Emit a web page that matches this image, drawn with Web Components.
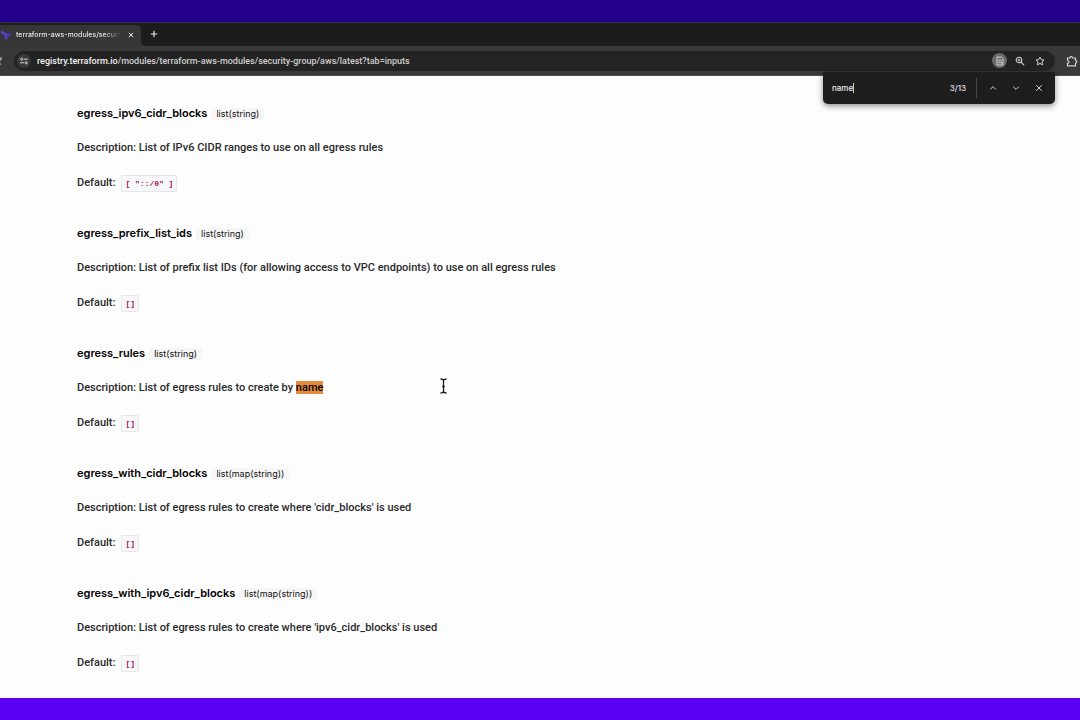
<!DOCTYPE html>
<html lang="en">
<head>
<meta charset="utf-8">
<title>terraform-aws-modules/security-group</title>
<style>
  body { margin: 0; font-family: Inter, "Liberation Sans", sans-serif; }
</style>
</head>
<body>
<screen-frame>
  <browser-tabs slot="chrome">terraform-aws-modules/security-group/aws</browser-tabs>
  <browser-toolbar slot="chrome" host="registry.terraform.io" path="/modules/terraform-aws-modules/security-group/aws/latest?tab=inputs"></browser-toolbar>
  <find-bar slot="find" query="name" count="3/13"></find-bar>
  <module-input name="egress_ipv6_cidr_blocks" type="list(string)">List of IPv6 CIDR ranges to use on all egress rules<code-value slot="default">[ "::/0" ]</code-value></module-input>
  <module-input name="egress_prefix_list_ids" type="list(string)">List of prefix list IDs (for allowing access to VPC endpoints) to use on all egress rules<code-value slot="default">[]</code-value></module-input>
  <module-input name="egress_rules" type="list(string)">List of egress rules to create by <find-match>name</find-match><code-value slot="default">[]</code-value></module-input>
  <module-input name="egress_with_cidr_blocks" type="list(map(string))">List of egress rules to create where 'cidr_blocks' is used<code-value slot="default">[]</code-value></module-input>
  <module-input name="egress_with_ipv6_cidr_blocks" type="list(map(string))">List of egress rules to create where 'ipv6_cidr_blocks' is used<code-value slot="default">[]</code-value></module-input>
  <text-cursor slot="pointer"></text-cursor>
</screen-frame>

<script>
const define = (name, html, setup) => {
  const template = document.createElement('template');
  template.innerHTML = html;
  customElements.define(name, class extends HTMLElement {
    constructor() {
      super();
      this.attachShadow({ mode: 'open' }).append(template.content.cloneNode(true));
    }
    connectedCallback() { if (setup) setup(this, this.shadowRoot); }
  });
};

define('screen-frame', `
  <style>
    :host { display: flex; flex-direction: column; min-height: 100vh; position: relative; overflow: hidden; background: #fdfdfd; }
    .top { height: 22px; background: #22008c; border-bottom: 1px solid #35324a; }
    .bottom { height: 22px; background: #5a00f4; }
    main { flex: 1; padding: 27px 77px 0; display: flex; flex-direction: column; gap: 30px; }
  </style>
  <div class="top"></div>
  <slot name="chrome"></slot>
  <slot name="find"></slot>
  <main><slot></slot></main>
  <slot name="pointer"></slot>
  <div class="bottom"></div>
`);

define('browser-tabs', `
  <style>
    :host { display: flex; height: 23px; background: #1c1c1c; color: #e4e4e4; font-size: 7px; font-weight: 500; }
    .tab { position: relative; display: flex; align-items: center; box-sizing: border-box; width: 141px; margin-top: 2px; padding: 0 4px 2px 0; background: #363636; border-top-right-radius: 5px; }
    .tab::after { content: ""; position: absolute; left: 100%; bottom: 0; width: 5px; height: 5px; background: radial-gradient(circle at 100% 0, transparent 5px, #363636 5px); }
    .title { flex: 1; margin-left: 4px; overflow: hidden; white-space: nowrap; line-height: 12px; -webkit-mask-image: linear-gradient(90deg, #000 84%, transparent); mask-image: linear-gradient(90deg, #000 84%, transparent); }
    button { display: flex; justify-content: center; align-items: center; width: 12px; height: 12px; padding: 0; border: 0; background: none; color: #eee; }
    .close { margin-left: 4px; }
    .new { margin: 5px 0 0 7px; }
    svg { display: block; fill: none; stroke: currentColor; }
  </style>
  <div class="tab">
    <svg width="12" height="12" viewBox="0 0 12 12"><g fill="#5a40d8" stroke="none"><path d="M1 1.200 4 3v3.300L1 4.500z"/><path d="m4.500 3.200 3 1.700v3.300l-3-1.700zM4.500 7l3 1.700V11l-3-1.700z"/><path fill="#4930b4" d="m8 4.900 3-1.700v3.300L8 8.200z"/></g></svg>
    <span class="title"><slot></slot></span>
    <button class="close" aria-label="Close tab"><svg width="6" height="6" viewBox="0 0 6 6"><path d="m.8.8 4.4 4.4M5.2.8.8 5.2"/></svg></button>
  </div>
  <button class="new" aria-label="New tab"><svg width="8" height="8" viewBox="0 0 8 8"><path d="M4 .8v6.4M.8 4h6.4" stroke-width="1.1"/></svg></button>
`);

define('browser-toolbar', `
  <style>
    :host { display: flex; align-items: center; box-sizing: border-box; height: 30px; padding-right: 1px; background: #383838; border-bottom: 1px solid #4b4b4b; color: #d2d2d2; }
    button { flex: none; display: flex; justify-content: center; align-items: center; width: 14px; height: 14px; padding: 0; border: 0; border-radius: 50%; background: none; color: #d0d0d0; }
    svg { display: block; fill: none; stroke: currentColor; }
    .reload { width: 2px; height: 8px; margin-right: 12px; justify-content: flex-end; overflow: hidden; border-radius: 0; }
    .address { flex: 1; min-width: 0; display: flex; align-items: center; gap: 6px; height: 20px; padding: 0 8px 0 3px; border-radius: 10px; background: #232323; }
    .site { background: #3a3a3a; }
    a { flex: 1; overflow: hidden; white-space: nowrap; color: #cfcfcf; text-decoration: none; font: 500 9px/14px Roboto, sans-serif; }
    .host { color: #f4f4f4; }
    .find { width: 15px; height: 15px; background: #6a6a6a; }
    .ext { margin-left: 10px; }
  </style>
  <button class="reload" aria-label="Reload"><svg width="2" height="8" viewBox="0 0 2 8"><path d="M0 3h1V0M0 7h1" /></svg></button>
  <div class="address">
    <button class="site" aria-label="Site information"><svg width="8" height="8" viewBox="0 0 8 8" stroke-width="1"><circle cx="1.8" cy="2.2" r="1.1"/><path d="M4 2.2h4M0 5.8h4"/><circle cx="6.2" cy="5.8" r="1.1"/></svg></button>
    <a href="#"><span class="host"></span><span class="path"></span></a>
    <button class="find" aria-label="Find in page"><svg width="10" height="10" viewBox="0 0 10 10" stroke-width="1"><path d="M2 1h4.4L8 2.6V9H2z"/><circle cx="5" cy="5.4" r="1.5"/><path d="m6.1 6.5 1.7 1.8"/></svg></button>
    <button aria-label="Zoom"><svg width="10" height="10" viewBox="0 0 10 10" stroke-width="1.1"><circle cx="4" cy="4" r="2.8"/><path d="m6.1 6.1 3 3M2.8 4h2.4M4 2.8v2.4"/></svg></button>
    <button aria-label="Bookmark"><svg width="10" height="10" viewBox="0 0 10 10" stroke-width="1"><path d="m5 1 1.2 2.7 2.9.3L6.9 6l.7 2.9L5 7.4 2.4 8.900l.7-2.900L.9 4l2.900-.3z"/></svg></button>
  </div>
  <button class="ext" aria-label="Extensions"><svg width="12" height="12" viewBox="0 0 12 12" stroke-width="1.2"><path d="M1.500 3h2.300a1.400 1.400 0 0 1 2.800 0h2.900v2.500a1.300 1.300 0 0 1 0 2.600v2.700h-8V8.300a1.400 1.400 0 0 0 0-2.800z"/></svg></button>
`, (el, root) => {
  root.querySelector('.host').textContent = el.getAttribute('host');
  root.querySelector('.path').textContent = el.getAttribute('path');
});

define('find-bar', `
  <style>
    :host { position: absolute; top: 72px; right: 25px; display: flex; align-items: center; box-sizing: border-box; width: 232px; height: 32px; padding: 0 9px; border-radius: 0 0 5px 5px; background: #1d1d1d; box-shadow: 0 2px 6px rgba(0,0,0,.45); color: #e0e0e0; font-size: 8px; font-weight: 500; }
    label { flex: 1; display: flex; align-items: center; }
    input { field-sizing: content; min-width: 4px; padding: 0; border: 0; outline: 0; background: none; color: #eee; font: inherit; line-height: 12px; }
    .caret { width: 1px; height: 10px; background: #ccc; }
    .rule { width: 1px; height: 20px; margin: 0 9px 0 10px; background: #484848; }
    button { display: flex; justify-content: center; align-items: center; width: 14px; height: 14px; margin-right: 9px; padding: 0; border: 0; background: none; color: #d0d0d0; }
    button:last-child { margin-right: 0; }
    svg { fill: none; stroke: currentColor; stroke-width: 1; }
  </style>
  <label><input type="text" aria-label="Find in page"><span class="caret"></span></label>
  <span class="count"></span>
  <span class="rule"></span>
  <button aria-label="Previous"><svg width="8" height="8" viewBox="0 0 8 8"><path d="m1.200 5.400 2.800-2.800 2.800 2.800"/></svg></button>
  <button aria-label="Next"><svg width="8" height="8" viewBox="0 0 8 8"><path d="m1.200 2.600 2.800 2.800 2.800-2.800"/></svg></button>
  <button aria-label="Close"><svg width="8" height="8" viewBox="0 0 8 8"><path d="m1.200 1.200 5.600 5.600M6.800 1.200 1.200 6.800"/></svg></button>
`, (el, root) => {
  root.querySelector('input').value = el.getAttribute('query');
  root.querySelector('.count').textContent = el.getAttribute('count');
});

define('module-input', `
  <style>
    :host { display: block; color: #2a2a2a; font: 500 11px/20px Roboto, sans-serif; }
    header { display: flex; align-items: baseline; gap: 4px; font-family: Inter, sans-serif; }
    h4 { margin: 0; font-size: 11px; font-weight: 600; color: #000; }
    .type { padding: 0 5px; border-radius: 2px; background: #f6f6f6; font-size: 9px; line-height: 12px; font-weight: 400; color: #111; }
    p { margin: 15px 0 0; }
    .default { display: flex; align-items: center; gap: 6px; }
  </style>
  <header><h4></h4><span class="type"></span></header>
  <p>Description: <slot></slot></p>
  <p class="default"><span>Default:</span><slot name="default"></slot></p>
`, (el, root) => {
  root.querySelector('h4').textContent = el.getAttribute('name');
  root.querySelector('.type').textContent = el.getAttribute('type');
});

define('code-value', `
  <style>
    :host { display: block; padding: 0 3px; border: 1px solid #e6e6ea; border-radius: 2px; background: #f8f8fa; }
    code { display: block; font: bold 8px/15px "Liberation Mono", monospace; color: #9c1258; white-space: pre; }
  </style>
  <code><slot></slot></code>
`);

define('find-match', `
  <style>
    :host { display: inline; }
    mark { background: #e58a3a; color: #000; }
  </style>
  <mark><slot></slot></mark>
`);

define('text-cursor', `
  <style>
    :host { position: absolute; left: 439px; top: 378px; }
    svg { display: block; }
  </style>
  <svg width="9" height="16" viewBox="0 0 9 16" fill="none" stroke="#1a1a1a" stroke-width="1.300"><path d="M1.500 1Q4.500 1 4.500 3Q4.500 1 7.500 1M4.500 3v10M1.500 15Q4.500 15 4.500 13Q4.500 15 7.500 15M3.200 8.500h2.600"/></svg>
`);
</script>
</body>
</html>
